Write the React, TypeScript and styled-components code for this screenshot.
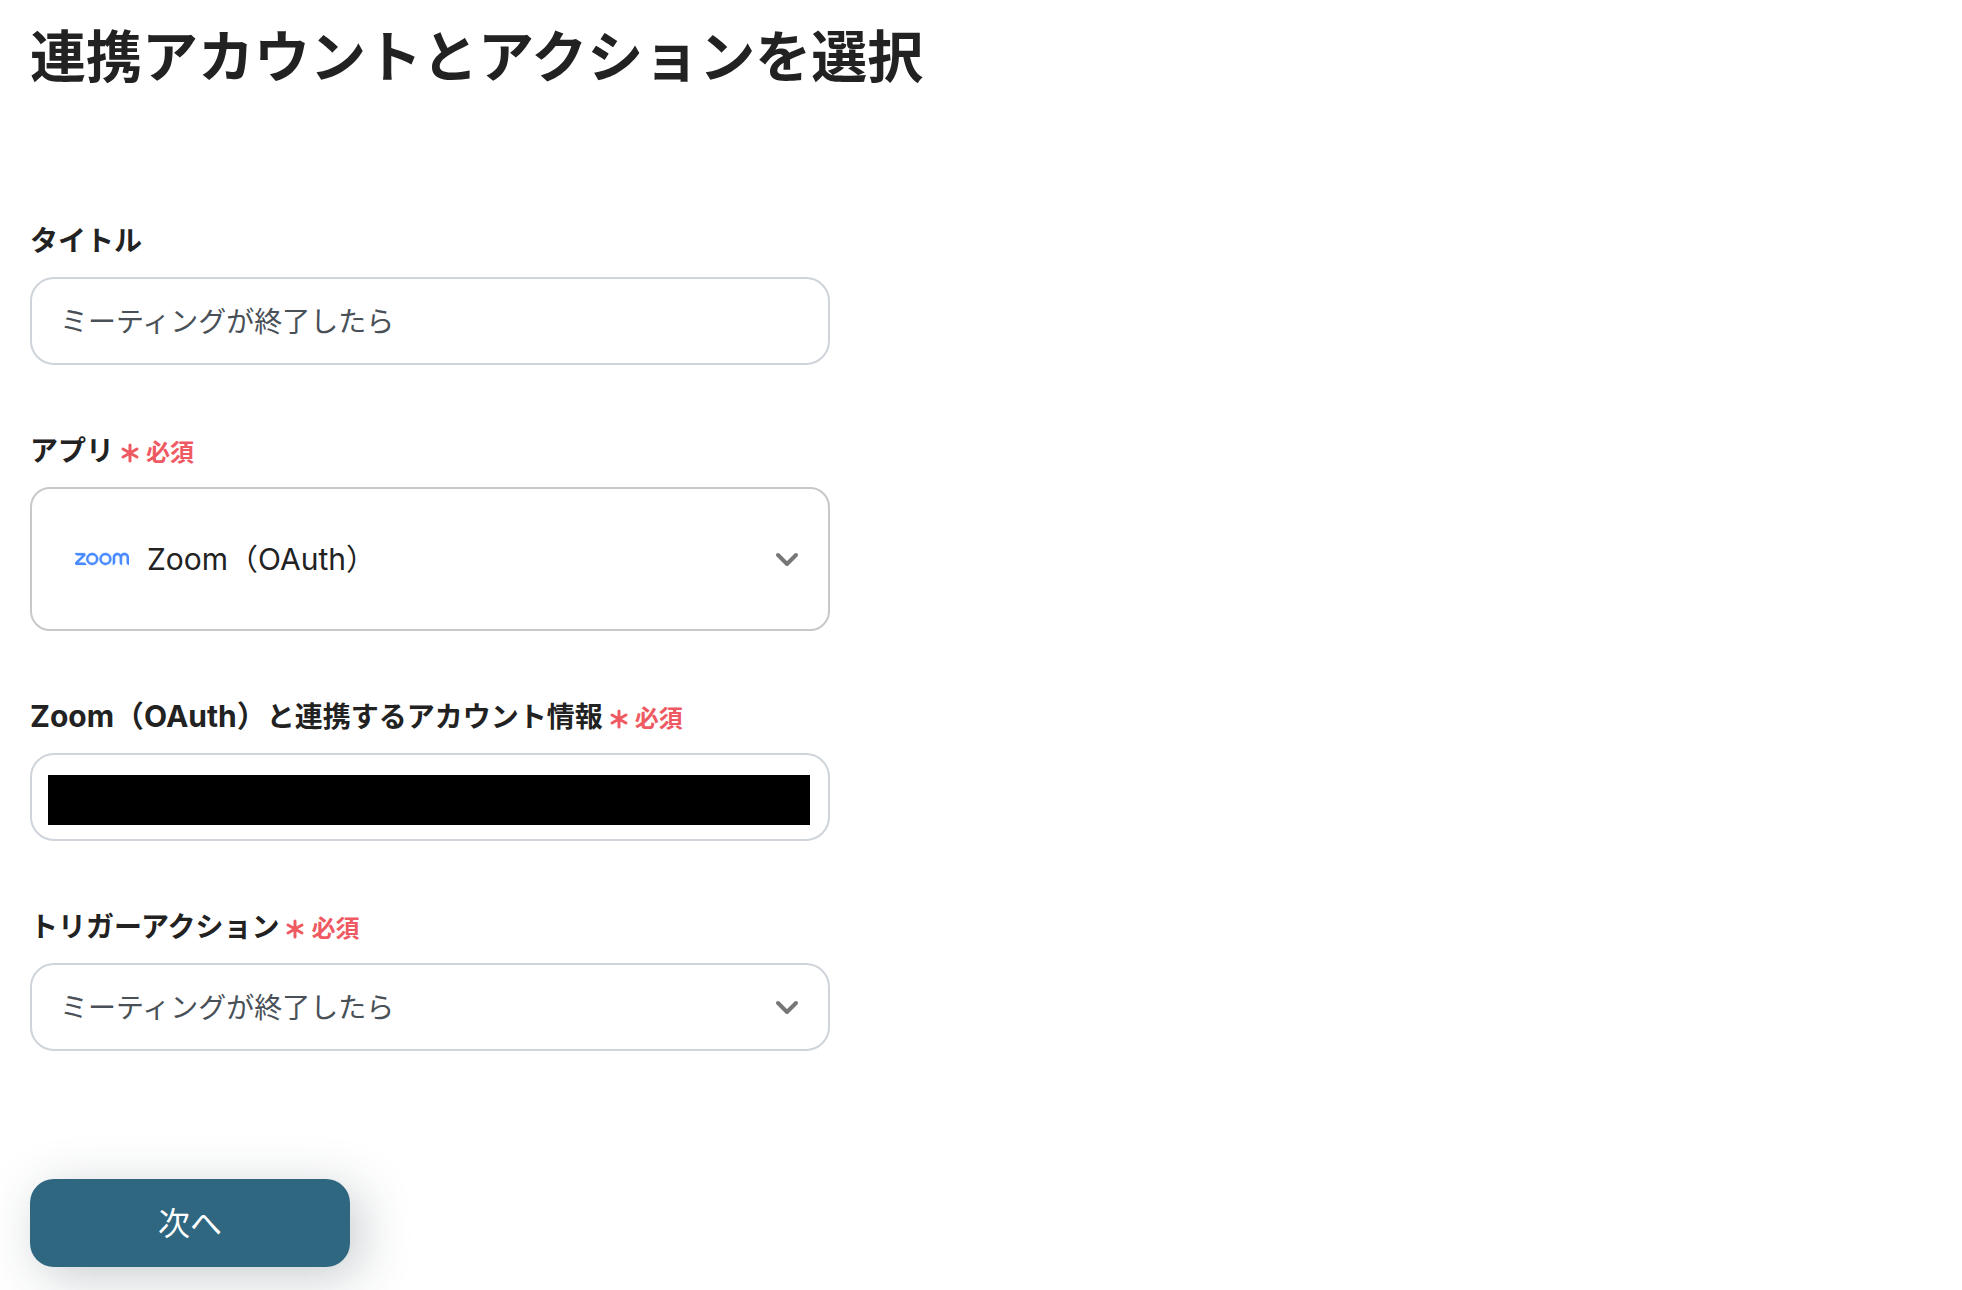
import React, { useState } from "react";
import styled, { createGlobalStyle } from "styled-components";
import { SiZoom } from "react-icons/si";

const GlobalStyle = createGlobalStyle`
  *, *::before, *::after {
    box-sizing: border-box;
  }
  body {
    margin: 0;
    background: #ffffff;
    color: #222222;
    font-family: "Noto Sans CJK JP", sans-serif;
  }
`;

const Page = styled.main`
  padding: 12px 30px 23px;
`;

const Heading = styled.h1`
  margin: 0;
  font-size: 56px;
  line-height: 82px;
  font-weight: 700;
`;

const Form = styled.form`
  display: flex;
  flex-direction: column;
  align-items: flex-start;
  gap: 64px;
  max-width: 800px;
  margin-top: 125px;
`;

const Field = styled.div`
  width: 100%;
  display: flex;
  flex-direction: column;
  gap: 18px;
`;

const Label = styled.label`
  display: flex;
  align-items: center;
  height: 40px;
  font-size: 28px;
  line-height: 40px;
  font-weight: 700;
`;

const Latin = styled.span`
  font-family: Inter, "Noto Sans CJK JP", sans-serif;
  font-size: 30px;
`;

const Required = styled.span`
  display: flex;
  align-items: center;
  gap: 6px;
  margin: 4px 0 0 6px;
  color: #ef5a62;
  font-size: 24px;
`;

const AsteriskIcon = styled.svg`
  width: 20px;
  height: 20px;
  margin-top: 4px;
  fill: none;
  stroke: currentColor;
  stroke-width: 3;
  stroke-linecap: round;
`;

const Control = styled.div`
  display: grid;
  align-items: center;

  & > * {
    grid-area: 1 / 1;
  }
`;

const controlStyle = `
  width: 100%;
  height: 88px;
  margin: 0;
  padding: 0 28px 2px;
  border: 2px solid #ced4da;
  border-radius: 24px;
  background: #ffffff;
  color: #495057;
  font-family: "Noto Sans CJK JP", sans-serif;
  font-size: 28px;
  appearance: none;
`;

const TextInput = styled.input`
  ${controlStyle}
`;

const Select = styled.select`
  ${controlStyle}
`;

const AppSelect = styled(Select)`
  height: 144px;
  padding: 0 28px 0 115px;
  border-color: #c8c8c8;
  border-radius: 20px;
  color: #222222;
  font-family: Inter, "Noto Sans CJK JP", sans-serif;
  font-size: 30px;
`;

const AppLogo = styled(SiZoom)`
  width: 54px;
  height: 54px;
  margin-left: 45px;
  color: #4a8cff;
  stroke: #4a8cff;
  stroke-width: 0.1px;
  pointer-events: none;
`;

const Mask = styled.span`
  height: 50px;
  margin: 6px 20px 0 18px;
  background: #000000;
`;

const ChevronIcon = styled.svg`
  justify-self: end;
  width: 24px;
  height: 16px;
  margin-right: 31px;
  fill: none;
  stroke: #777777;
  stroke-width: 4;
  stroke-linecap: round;
  stroke-linejoin: round;
  pointer-events: none;
`;

const SubmitButton = styled.button`
  width: 320px;
  height: 88px;
  margin-top: 64px;
  padding: 0 0 4px;
  border: 0;
  border-radius: 24px;
  background: #2f6780;
  box-shadow: 10px 10px 50px rgba(35, 55, 65, 0.25);
  color: #ffffff;
  font-family: "Noto Sans CJK JP", sans-serif;
  font-size: 32px;
`;

function Chevron() {
  return (
    <ChevronIcon viewBox="0 0 24 16" aria-hidden="true">
      <path d="M3 4 L12 13 L21 4" />
    </ChevronIcon>
  );
}

function RequiredMark() {
  return (
    <Required>
      <AsteriskIcon viewBox="0 0 20 20" aria-hidden="true">
        <path d="M10 2 V18 M3 6 L17 14 M17 6 L3 14" />
      </AsteriskIcon>
      必須
    </Required>
  );
}

export default function App() {
  const [title, setTitle] = useState("ミーティングが終了したら");

  return (
    <>
      <GlobalStyle />
      <Page>
        <Heading>連携アカウントとアクションを選択</Heading>
        <Form onSubmit={(event) => event.preventDefault()}>
          <Field>
            <Label htmlFor="title">タイトル</Label>
            <TextInput
              id="title"
              type="text"
              value={title}
              onChange={(event) => setTitle(event.target.value)}
            />
          </Field>
          <Field>
            <Label htmlFor="app">
              アプリ
              <RequiredMark />
            </Label>
            <Control>
              <AppSelect id="app">
                <option>Zoom（OAuth）</option>
              </AppSelect>
              <AppLogo aria-hidden="true" />
              <Chevron />
            </Control>
          </Field>
          <Field>
            <Label htmlFor="account">
              <span>
                <Latin>Zoom（OAuth）</Latin>と連携するアカウント情報
              </span>
              <RequiredMark />
            </Label>
            <Control>
              <TextInput id="account" type="text" readOnly />
              <Mask />
            </Control>
          </Field>
          <Field>
            <Label htmlFor="trigger">
              トリガーアクション
              <RequiredMark />
            </Label>
            <Control>
              <Select id="trigger">
                <option>ミーティングが終了したら</option>
              </Select>
              <Chevron />
            </Control>
          </Field>
          <SubmitButton type="submit">次へ</SubmitButton>
        </Form>
      </Page>
    </>
  );
}
